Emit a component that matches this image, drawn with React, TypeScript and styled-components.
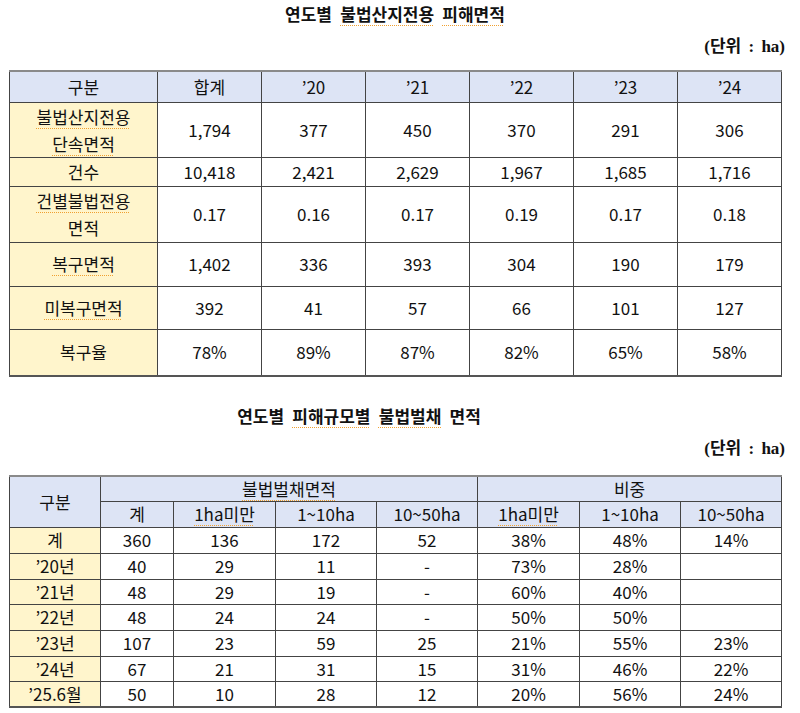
import React from "react";
import styled, { createGlobalStyle } from "styled-components";

const Global = createGlobalStyle`
  html, body { margin: 0; padding: 0; background: #ffffff; }
  body { font-family: "Noto Sans CJK KR", "Noto Sans", sans-serif; color: #111; }
`;

const Page = styled.div`
  width: 772px;
  padding-left: 9px;
  display: flex;
  flex-direction: column;
`;

const Title = styled.div<{ $shift?: number; $top?: number }>`
  height: 32px;
  line-height: 32px;
  margin-top: ${(p) => p.$top ?? 0}px;
  padding-right: ${(p) => (p.$shift ?? 0) * 2}px;
  text-align: center;
  font-family: "Liberation Serif", "Noto Sans CJK KR", serif;
  font-weight: 700;
  font-size: 17px;
  word-spacing: 4px;
  color: #111;
`;

const Unit = styled.div<{ $bottom: number }>`
  height: 30px;
  line-height: 30px;
  margin-right: -4px;
  margin-bottom: ${(p) => p.$bottom}px;
  text-align: right;
  font-family: "Liberation Serif", "Noto Sans CJK KR", serif;
  font-weight: 700;
  font-size: 17px;
  word-spacing: 3px;
  color: #111;
`;

const Spell = styled.span`
  text-decoration: underline dotted #f0a030;
  text-decoration-thickness: 1px;
  text-underline-offset: 4px;
`;

const Table = styled.table`
  width: 772px;
  table-layout: fixed;
  border-collapse: collapse;
  border-top: 2px solid #8a8a8a;
  border-bottom: 2px solid #555;
  font-family: "Noto Sans CJK KR", "Noto Sans", sans-serif;
  font-size: 17px;
  color: #111;
`;

const Row = styled.tr<{ $h: number }>`
  height: ${(p) => p.$h}px;
`;

const Head = styled.th`
  background: #dde4f5;
  font-weight: 400;
  border: 1px solid #444;
  padding: 0;
  text-align: center;
  vertical-align: middle;
  line-height: 20px;
`;

const Label = styled.td<{ $tall?: boolean }>`
  background: #fff5cc;
  border: 1px solid #444;
  padding: 0;
  text-align: center;
  vertical-align: middle;
  line-height: ${(p) => (p.$tall ? 27 : 20)}px;
  white-space: nowrap;
`;

const Cell = styled.td`
  background: #ffffff;
  border: 1px solid #444;
  padding: 0;
  text-align: center;
  vertical-align: middle;
  line-height: 20px;
`;

type R1 = { label: React.ReactNode; h: number; tall?: boolean; vals: string[] };

const t1: R1[] = [
  {
    label: (
      <>
        <Spell>불법산지전용</Spell>
        <br />
        <Spell>단속면적</Spell>
      </>
    ),
    h: 55,
    tall: true,
    vals: ["1,794", "377", "450", "370", "291", "306"],
  },
  { label: "건수", h: 29, vals: ["10,418", "2,421", "2,629", "1,967", "1,685", "1,716"] },
  {
    label: (
      <>
        <Spell>건별불법전용</Spell>
        <br />
        면적
      </>
    ),
    h: 56,
    tall: true,
    vals: ["0.17", "0.16", "0.17", "0.19", "0.17", "0.18"],
  },
  { label: <Spell>복구면적</Spell>, h: 44, vals: ["1,402", "336", "393", "304", "190", "179"] },
  { label: <Spell>미복구면적</Spell>, h: 43, vals: ["392", "41", "57", "66", "101", "127"] },
  { label: "복구율", h: 47, vals: ["78%", "89%", "87%", "82%", "65%", "58%"] },
];

const t2: { label: string; h: number; vals: string[] }[] = [
  { label: "계", h: 26, vals: ["360", "136", "172", "52", "38%", "48%", "14%"] },
  { label: "’20년", h: 26, vals: ["40", "29", "11", "-", "73%", "28%", ""] },
  { label: "’21년", h: 25, vals: ["48", "29", "19", "-", "60%", "40%", ""] },
  { label: "’22년", h: 26, vals: ["48", "24", "24", "-", "50%", "50%", ""] },
  { label: "’23년", h: 26, vals: ["107", "23", "59", "25", "21%", "55%", "23%"] },
  { label: "’24년", h: 25, vals: ["67", "21", "31", "15", "31%", "46%", "22%"] },
  { label: "’25.6월", h: 26, vals: ["50", "10", "28", "12", "20%", "56%", "24%"] },
];

const w1 = [148, 104, 104, 104, 104, 104, 104];
const w2 = [91, 73, 102, 101, 101, 102, 101, 101];

export default function App() {
  return (
    <>
      <Global />
      <Page>
        <Title>
          연도별 <Spell>불법산지전용</Spell> <Spell>피해면적</Spell>
        </Title>
        <Unit $bottom={8}>(단위 : ha)</Unit>
        <Table>
          <colgroup>
            {w1.map((w, i) => (
              <col key={i} style={{ width: w }} />
            ))}
          </colgroup>
          <tbody>
            <Row $h={31}>
              {["구분", "합계", "’20", "’21", "’22", "’23", "’24"].map((h) => (
                <Head key={h}>{h}</Head>
              ))}
            </Row>
            {t1.map((r, i) => (
              <Row $h={r.h} key={i}>
                <Label $tall={r.tall}>{r.label}</Label>
                {r.vals.map((v, j) => (
                  <Cell key={j}>{v}</Cell>
                ))}
              </Row>
            ))}
          </tbody>
        </Table>

        <Title $top={25} $shift={36}>
          연도별 <Spell>피해규모별</Spell> <Spell>불법벌채</Spell> 면적
        </Title>
        <Unit $bottom={11}>(단위 : ha)</Unit>
        <Table>
          <colgroup>
            {w2.map((w, i) => (
              <col key={i} style={{ width: w }} />
            ))}
          </colgroup>
          <tbody>
            <Row $h={25}>
              <Head rowSpan={2}>구분</Head>
              <Head colSpan={4}>
                <Spell>불법벌채면적</Spell>
              </Head>
              <Head colSpan={3}>비중</Head>
            </Row>
            <Row $h={26}>
              <Head>계</Head>
              <Head>
                <Spell>1ha미만</Spell>
              </Head>
              <Head>1~10ha</Head>
              <Head>10~50ha</Head>
              <Head>
                <Spell>1ha미만</Spell>
              </Head>
              <Head>1~10ha</Head>
              <Head>10~50ha</Head>
            </Row>
            {t2.map((r, i) => (
              <Row $h={r.h} key={i}>
                <Label>{r.label}</Label>
                {r.vals.map((v, j) => (
                  <Cell key={j}>{v}</Cell>
                ))}
              </Row>
            ))}
          </tbody>
        </Table>
      </Page>
    </>
  );
}
